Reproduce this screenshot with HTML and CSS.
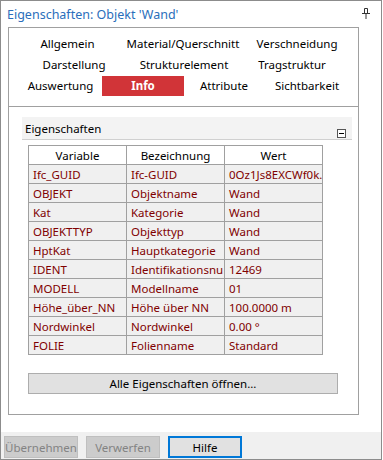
FILE: index.html
```html
<!DOCTYPE html>
<html lang="de">
<head>
    <meta charset="UTF-8">
    <title>Eigenschaften</title>
    <link rel="stylesheet" href="styles.css">
</head>
<body>
    <div class="window">
        <div class="titlebar">
            <span class="title">Eigenschaften: Objekt 'Wand'</span>
            <svg class="pin" width="8" height="11" viewBox="0 0 8 11">
                <path d="M2.5 0.5h3v5h-3z M0 5.5h8 M4 6v5" fill="none" stroke="#333" stroke-width="1"/>
            </svg>
        </div>

        <div class="main">
            <div class="panel">
                <div class="tabs">
                    <div class="tabrow row1">
                        <span class="tab">Allgemein</span>
                        <span class="tab">Material/Querschnitt</span>
                        <span class="tab">Verschneidung</span>
                    </div>
                    <div class="tabrow row2">
                        <span class="tab">Darstellung</span>
                        <span class="tab">Strukturelement</span>
                        <span class="tab">Tragstruktur</span>
                    </div>
                    <div class="tabrow row3">
                        <span class="tab">Auswertung</span>
                        <span class="tab active">Info</span>
                        <span class="tab">Attribute</span>
                        <span class="tab">Sichtbarkeit</span>
                    </div>
                </div>

                <div class="content">
                    <div class="group-head">
                        <span>Eigenschaften</span>
                        <span class="collapse"></span>
                    </div>

                    <table class="props">
                        <tr><th>Variable</th><th>Bezeichnung</th><th>Wert</th></tr>
                        <tr><td>Ifc_GUID</td><td>Ifc-GUID</td><td>0Oz1Js8EXCWf0k.</td></tr>
                        <tr><td>OBJEKT</td><td>Objektname</td><td>Wand</td></tr>
                        <tr><td>Kat</td><td>Kategorie</td><td>Wand</td></tr>
                        <tr><td>OBJEKTTYP</td><td>Objekttyp</td><td>Wand</td></tr>
                        <tr><td>HptKat</td><td>Hauptkategorie</td><td>Wand</td></tr>
                        <tr><td>IDENT</td><td>Identifikationsnu</td><td>12469</td></tr>
                        <tr><td>MODELL</td><td>Modellname</td><td>01</td></tr>
                        <tr><td>Höhe_über_NN</td><td>Höhe über NN</td><td>100.0000 m</td></tr>
                        <tr><td>Nordwinkel</td><td>Nordwinkel</td><td>0.00 °</td></tr>
                        <tr><td>FOLIE</td><td>Folienname</td><td>Standard</td></tr>
                    </table>

                    <button class="btn-all">Alle Eigenschaften öffnen...</button>
                </div>
            </div>
        </div>

        <div class="footer">
            <button class="btn disabled">Übernehmen</button>
            <button class="btn disabled">Verwerfen</button>
            <button class="btn focus">Hilfe</button>
        </div>
    </div>
</body>
</html>
```

FILE: styles.css
```css
* {
    margin: 0;
    padding: 0;
    box-sizing: border-box;
}

body {
    background: #fff;
    font-family: "Noto Sans", "Open Sans", sans-serif;
    font-size: 11.5px;
    color: #000;
}

.window {
    width: 382px;
    height: 460px;
    border: 1px solid #8c8c8c;
    display: flex;
    flex-direction: column;
}

.titlebar {
    height: 26px;
    display: flex;
    align-items: center;
    justify-content: space-between;
    padding: 0 11px 0 6px;
}

.title {
    color: #2a6ebb;
    font-size: 12.5px;
}

.pin {
    margin-top: -2px;
}

.main {
    padding: 0 22px 0 7px;
}

.panel {
    height: 388px;
    border: 1px solid #a0a0a0;
    display: flex;
    flex-direction: column;
}

.tabs {
    height: 79px;
    border-bottom: 1px solid #a0a0a0;
    padding-top: 5px;
}

.tabrow {
    display: grid;
    height: 21px;
    align-items: center;
}

.row1 { grid-template-columns: 10px 97px 134px 94px; }
.row2 { grid-template-columns: 10px 110px 110px 106px; }
.row3 { grid-template-columns: 10px 83px 82px 80px 86px; margin-top: 1px; height: 20px; }

.row1 .tab:first-child,
.row2 .tab:first-child,
.row3 .tab:first-child {
    grid-column: 2;
}

.tab {
    text-align: center;
    white-space: nowrap;
    line-height: 20px;
}

.tab.active {
    background: #d13438;
    color: #fff;
    font-weight: bold;
    height: 20px;
}

.content {
    flex: 1;
    padding: 10px 6px 0 13px;
}

.group-head {
    height: 23px;
    background: #f3f3f3;
    border-bottom: 1px solid #d0d0d0;
    display: flex;
    justify-content: space-between;
    align-items: center;
    padding: 0 6px 0 3px;
}

.collapse {
    width: 9px;
    height: 9px;
    border: 1px solid #555;
    margin-top: 11px;
    position: relative;
    background: #fff;
}

.collapse::after {
    content: "";
    position: absolute;
    left: 1px;
    right: 1px;
    top: 3px;
    height: 1px;
    background: #000;
}

.props {
    margin: 5px 0 0 6px;
    border-collapse: collapse;
    table-layout: fixed;
    width: 295px;
}

.props th,
.props td {
    width: 98px;
    height: 19px;
    border: 1px solid #a0a0a0;
    white-space: nowrap;
    overflow: hidden;
    font-weight: normal;
    padding: 0 0 0 4px;
    line-height: 17px;
}

.props th {
    background: #fff;
    text-align: center;
    padding: 0;
}

.props td {
    background: #f0f0f0;
    color: #800000;
}

.btn-all {
    display: block;
    margin: 18px 0 0 6px;
    width: 310px;
    height: 21px;
    background: #e1e1e1;
    border: 1px solid #adadad;
    font-family: inherit;
    font-size: 11.5px;
    color: #000;
}

.footer {
    margin-top: auto;
    height: 27px;
    background: #f0f0f0;
    display: flex;
    gap: 8px;
    padding: 4px 3px 0;
}

.btn {
    width: 74px;
    height: 22px;
    font-family: inherit;
    font-size: 11.5px;
    background: #e1e1e1;
    border: 1px solid #adadad;
    color: #000;
}

.btn.disabled {
    background: #cccccc;
    border-color: #bfbfbf;
    color: #838383;
}

.btn.focus {
    border: 2px solid #0078d7;
}
```
